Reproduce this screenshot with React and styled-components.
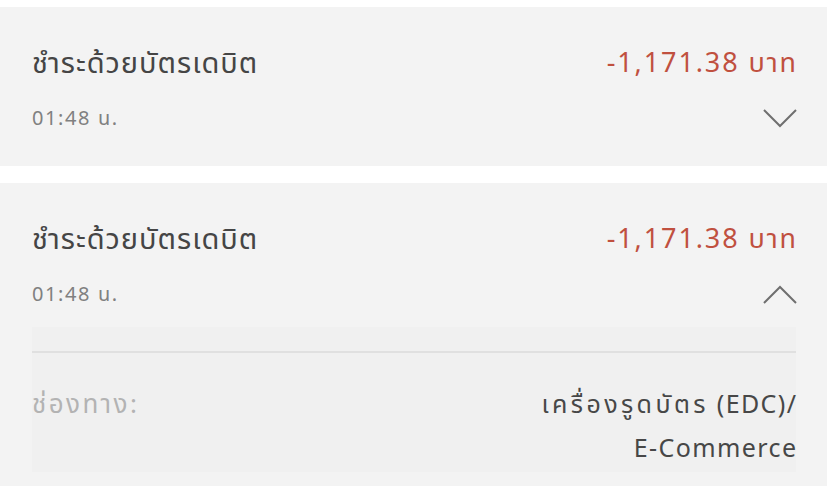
import React from "react";
import styled, { createGlobalStyle } from "styled-components";

const Global = createGlobalStyle`
  html, body { margin: 0; padding: 0; background: #ffffff; }
  body { font-family: "Noto Sans", "Noto Sans Thai", "DejaVu Sans", sans-serif; }
`;

const List = styled.div`
  display: flex;
  flex-direction: column;
  gap: 17px;
  padding-top: 7px;
`;

const Card = styled.div`
  background: #f3f3f3;
  padding: 36px 31px 33px 32px;
  display: flex;
  flex-direction: column;
`;

const Row = styled.div`
  display: flex;
  justify-content: space-between;
  align-items: center;
  margin-top: ${(p) => p.$mt || 0}px;
  height: ${(p) => p.$h}px;
`;

const Title = styled.div`
  font-size: 29px;
  letter-spacing: 1px;
  color: #454545;
  line-height: 38px;
`;

const Amount = styled.div`
  font-size: 27px;
  letter-spacing: 1.9px;
  color: #c0503f;
  line-height: 38px;
  margin-right: -1.9px;
`;

const Time = styled.div`
  font-size: 20px;
  letter-spacing: 1.6px;
  color: #808080;
  line-height: 30px;
`;

const Chevron = styled.svg`
  width: 34px;
  height: 19px;
  display: block;
  margin-right: -1px;
`;

const Detail = styled.div`
  margin-top: 18px;
  background: #f0f0f0;
  padding-top: 24px;
  margin-bottom: -19px;
`;

const Divider = styled.div`
  height: 2px;
  background: #e0e0e0;
`;

const DetailRow = styled.div`
  display: flex;
  justify-content: space-between;
  padding: 28px 0 3px;
`;

const Label = styled.div`
  font-size: 26px;
  letter-spacing: 2.4px;
  line-height: 44px;
  color: #b3b3b3;
`;

const Value = styled.div`
  font-size: 25px;
  letter-spacing: 1.4px;
  line-height: 44px;
  color: #474747;
  text-align: right;
  margin-right: -1.4px;
`;

const Thai = styled.span`
  letter-spacing: 3.4px;
`;

function ChevronIcon({ up }) {
  return (
    <Chevron viewBox="0 0 34 19">
      <polyline
        points={up ? "1,18 17,2 33,18" : "1,1 17,17 33,1"}
        fill="none"
        stroke="#6f6f6f"
        strokeWidth="2"
      />
    </Chevron>
  );
}

function Transaction({ open }) {
  return (
    <Card>
      <Row $h={38}>
        <Title>ชำระด้วยบัตรเดบิต</Title>
        <Amount>-1,171.38 บาท</Amount>
      </Row>
      <Row $h={30} $mt={22}>
        <Time>01:48 น.</Time>
        <ChevronIcon up={open} />
      </Row>
      {open && (
        <Detail>
          <Divider />
          <DetailRow>
            <Label>ช่องทาง:</Label>
            <Value>
              <Thai>เครื่องรูดบัตร</Thai> (EDC)/
              <br />
              E-Commerce
            </Value>
          </DetailRow>
        </Detail>
      )}
    </Card>
  );
}

export default function App() {
  return (
    <>
      <Global />
      <List>
        <Transaction />
        <Transaction open />
      </List>
    </>
  );
}
